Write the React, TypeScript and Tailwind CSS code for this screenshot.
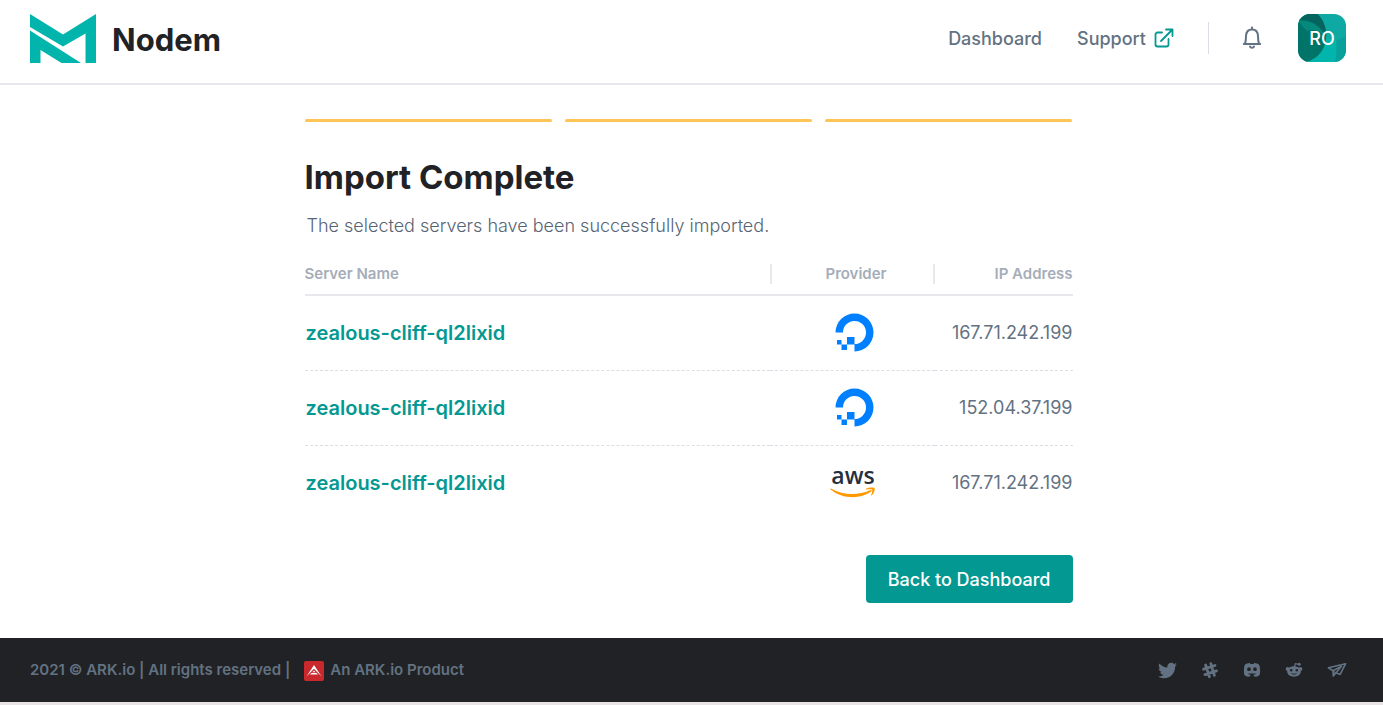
import { FaTwitter } from "react-icons/fa";

type Provider = "digitalocean" | "aws";

const servers: { name: string; provider: Provider; ip: string }[] = [
  { name: "zealous-cliff-ql2lixid", provider: "digitalocean", ip: "167.71.242.199" },
  { name: "zealous-cliff-ql2lixid", provider: "digitalocean", ip: "152.04.37.199" },
  { name: "zealous-cliff-ql2lixid", provider: "aws", ip: "167.71.242.199" },
];

function NodemMark() {
  return (
    <svg viewBox="0 0 66 49" className="h-[49px] w-[66px] fill-[#02b5ac]" aria-hidden="true">
      <path d="M0 0 L33 20.5 L66 0 V49 H55.5 V19.5 L33 32.5 L0 13 Z" />
      <path d="M0 16.5 L51 49 H31.5 L10.5 36 V49 H0 Z" />
    </svg>
  );
}

function ExternalIcon() {
  return (
    <svg
      viewBox="0 0 20 20"
      className="size-5 fill-none stroke-[#039891] stroke-[1.8]"
      strokeLinecap="round"
      strokeLinejoin="round"
      aria-hidden="true"
    >
      <path d="M8 4.5 H3.5 A2 2 0 0 0 1.5 6.5 V16.5 A2 2 0 0 0 3.5 18.5 H12.500 A2 2 0 0 0 14.500 16.5 V11" />
      <path d="M7 13 L18 2 M12 1.5 H18.5 V8" />
    </svg>
  );
}

function BellIcon() {
  return (
    <svg
      viewBox="0 0 20 24"
      className="h-6 w-5 fill-none stroke-[#637282] stroke-2"
      strokeLinecap="round"
      strokeLinejoin="round"
      aria-hidden="true"
    >
      <path d="M10 1.500 V3 M1.800 18 H18.200 M3 17.500 C4 15.500 3.800 13 4 10 C4.200 6 6.500 3.500 10 3.500 S15.800 6 16 10 C16.200 13 16 15.500 17 17.500" />
      <path d="M8 20.500 C8.500 22.300 11.500 22.300 12 20.500" />
    </svg>
  );
}

function AvatarArt() {
  return (
    <svg viewBox="0 0 48 48" className="col-start-1 row-start-1 size-12" aria-hidden="true">
      <rect width="48" height="48" fill="#0ea9a2" />
      <path d="M0 0 H20 C29 10 31 26 25 35 C21 42 15 46 9 48 H0 Z" fill="#007468" />
      <path d="M2 6 C13 5 23 12 28 22 C28 12 25 5 19 0 H7 Z" fill="#05655e" />
      <path d="M1 7 C14 5 24 14 28 24 C21 15 15 15 9 17 C6 14 3 11 1 7 Z" fill="#05897d" />
      <path d="M28 22 C32 27 36 27 39 26 C38 34 39 41 37 48 H9 C21 44 28 36 28 22 Z" fill="#02b5ac" />
      <path d="M38 26 C42 26 45 24 48 21 V48 H37 C39 40 39 33 38 26 Z" fill="#08a09a" />
    </svg>
  );
}

function DigitalOceanLogo() {
  return (
    <svg viewBox="0 0 39 39" className="size-[39px] fill-[#0080ff]" role="img" aria-label="DigitalOcean">
      <path d="M19.500 38.500 V31 A11.500 11.500 0 1 0 8 19.500 H0.500 A19 19 0 1 1 19.500 38.500 Z" />
      <path d="M12 24 H19.500 V31.500 H12 Z M6.500 31.500 H12 V37 H6.500 Z M2 27 H6.500 V31.500 H2 Z" />
    </svg>
  );
}

function AwsLogo() {
  return (
    <span className="flex flex-col items-center gap-0.5 pr-0.5 pb-0.5">
      <span className="font-['Open_Sans',sans-serif] text-[23px] leading-5 font-semibold text-[#252f3e]">aws</span>
      <svg viewBox="0 0 46 11" className="h-[11px] w-[46px] fill-[#ff9900]" aria-hidden="true">
        <path d="M0.800 1.500 C14 8.500 28 8.500 40 3.200 C41.500 2.600 42.300 3.800 41 4.800 C30 12.500 12 12 0.600 2.400 C0 1.800 0.200 1.200 0.800 1.500 Z" />
        <path d="M36 1.800 C38.500 0.200 43.500 0 44.500 1 C45.400 2.200 44 6.500 41.800 8.300 C41.300 8.700 40.900 8.500 41.100 8 C41.800 6.300 42.800 3.500 42.200 2.700 C41.600 2 38.300 2.300 36.500 2.500 C35.900 2.600 35.600 2.100 36 1.800 Z" />
      </svg>
    </span>
  );
}

function HashIcon() {
  return (
    <svg
      viewBox="0 0 18 18"
      className="size-[18px] fill-none stroke-[#637282] stroke-[2.8]"
      strokeLinecap="round"
      aria-hidden="true"
    >
      <path d="M4.600 4 L8.400 15.700 M9.800 2.700 L13.400 14.400 M2.600 8.200 L14 4.500 M3.900 13.600 L15.500 9.900" />
    </svg>
  );
}

function DiscordIcon() {
  return (
    <svg viewBox="0 0 18 18" className="size-[18px] fill-[#637282]" aria-hidden="true">
      <path
        fillRule="evenodd"
        d="M4.200 2.600 C5.300 2 6.300 1.900 7 2 L7.300 2.900 H10.700 L11 2 C11.700 1.900 12.700 2 13.800 2.600 C15.800 3 16.600 4.300 16.800 6 C17.200 8.500 17.200 11 16.900 13.200 C16.300 14.700 14.500 15.700 12.800 15.800 L10.700 15.300 V13.600 H12.500 V12.600 H5.500 V13.600 H7.300 V15.300 L5.200 15.800 C3.500 15.700 1.700 14.700 1.100 13.200 C0.800 11 0.800 8.500 1.200 6 C1.400 4.300 2.200 3 4.200 2.600 Z M6 6.300 A1.900 1.900 0 1 0 6 10.100 A1.900 1.900 0 1 0 6 6.300 Z M12 6.300 A1.900 1.900 0 1 0 12 10.100 A1.900 1.900 0 1 0 12 6.300 Z"
      />
    </svg>
  );
}

function RedditIcon() {
  return (
    <svg viewBox="0 0 18 18" className="size-[18px] fill-[#637282]" aria-hidden="true">
      <path d="M9.500 6 L10.300 2.700 L14 3.300" fill="none" stroke="#637282" strokeWidth="1.200" />
      <circle cx="14.200" cy="3.300" r="1.500" />
      <circle cx="2.600" cy="8" r="2" />
      <circle cx="15.400" cy="8" r="2" />
      <path
        fillRule="evenodd"
        d="M9 5.300 C13 5.300 15.800 7.500 15.800 10.500 S13 15.700 9 15.700 S2.200 13.500 2.200 10.500 S5 5.300 9 5.300 Z M6.200 7.900 A1.300 1.300 0 1 0 6.200 10.500 A1.300 1.300 0 1 0 6.200 7.900 Z M11.800 7.900 A1.300 1.300 0 1 0 11.800 10.500 A1.300 1.300 0 1 0 11.800 7.900 Z M5.800 12 C7.500 14.300 10.500 14.300 12.200 12 C10 13 8 13 5.800 12 Z"
      />
    </svg>
  );
}

function PlaneIcon() {
  return (
    <svg
      viewBox="0 0 20 18"
      className="h-[18px] w-5 fill-none stroke-[#637282] stroke-[1.6]"
      strokeLinejoin="round"
      strokeLinecap="round"
      aria-hidden="true"
    >
      <path d="M18.600 2.700 L1.400 6.800 L6 9.700 L6.300 15 L9 11.800 L13.200 13.400 Z" />
      <path d="M6 9.700 L14.500 5.300 L9 11.800 M7 10.500 L6.600 14" />
    </svg>
  );
}

function ArkMark() {
  return (
    <svg viewBox="0 0 20 20" className="size-5" aria-hidden="true">
      <rect width="20" height="20" rx="2" fill="#c9292c" />
      <path d="M10 4 L17.500 15.500 L10 7.800 L2.500 15.500 Z" fill="#fff" />
      <path d="M10 9.500 L11.600 11.200 H8.400 Z M7.500 12 H12.500 L14 13.500 H6 Z" fill="#fff" />
    </svg>
  );
}

export default function App() {
  return (
    <div className="min-h-screen bg-white font-['Inter',sans-serif] text-[#637282]">
      <header className="flex h-[85px] items-center justify-between border-b-2 border-[#e6e8ec] pr-[37px] pb-[7px] pl-[30px]">
        <a href="#" className="flex items-center gap-4">
          <NodemMark />
          <span className="pt-1 text-[31px] leading-10 font-bold text-[#212225]">Nodem</span>
        </a>
        <nav className="flex items-center text-[18px] font-medium">
          <a href="#">Dashboard</a>
          <a href="#" className="ml-[35px] flex items-center gap-2">
            Support
            <ExternalIcon />
          </a>
          <span className="ml-[34px] h-8 w-px bg-[#dbdee5]" />
          <button type="button" aria-label="Notifications" className="ml-[33px]">
            <BellIcon />
          </button>
          <button type="button" className="ml-9 grid size-12 place-items-center overflow-hidden rounded-xl">
            <AvatarArt />
            <span className="z-10 col-start-1 row-start-1 text-white">RO</span>
          </button>
        </nav>
      </header>

      <main className="mx-auto w-full max-w-[774px] pt-[34px] pr-[6px] pb-[35px]">
        <div className="grid grid-cols-3 gap-[13px]">
          <div className="h-[3px] rounded-full bg-[#ffc657]" />
          <div className="h-[3px] rounded-full bg-[#ffc657]" />
          <div className="h-[3px] rounded-full bg-[#ffc657]" />
        </div>
        <h1 className="mt-[35px] text-[33px] leading-10 font-bold text-[#212225]">Import Complete</h1>
        <p className="mt-[17px] pl-[2px] text-[18px] leading-6 font-light text-[#566474]">
          The selected servers have been successfully imported.
        </p>

        <table className="mt-[15px] w-full table-fixed border-collapse">
          <thead>
            <tr className="h-[42px] border-b-2 border-[#e6e8ec] text-[15px] leading-5 text-[#a5adb9]">
              <th className="p-0 text-left font-semibold">Server Name</th>
              <th className="w-[165px] p-0 font-semibold">
                <span className="block border-x-2 border-[#e6e8ec] pl-2">Provider</span>
              </th>
              <th className="w-[138px] p-0 text-right font-semibold">IP Address</th>
            </tr>
          </thead>
          <tbody>
            {servers.map((server, i) => (
              <tr key={i} className="h-[75px] border-b border-dashed border-[#dbdee5] last:border-0">
                <td className="p-0 pl-px text-[20px] font-semibold">
                  <a href="#" className="text-[#039891]">
                    {server.name}
                  </a>
                </td>
                <td className="p-0">
                  <div className="flex justify-center pl-1">
                    {server.provider === "aws" ? <AwsLogo /> : <DigitalOceanLogo />}
                  </div>
                </td>
                <td className="p-0 text-right text-[18px]">{server.ip}</td>
              </tr>
            ))}
          </tbody>
        </table>

        <div className="mt-[35px] flex justify-end">
          <button type="button" className="h-12 rounded bg-[#039891] px-[22px] text-[18px] font-medium text-white">
            Back to Dashboard
          </button>
        </div>
      </main>

      <footer className="flex h-[67px] items-center justify-between border-b-3 border-[#e8e4e6] bg-[#212225] pr-9 pl-[30px] text-[15px] font-semibold">
        <div className="flex items-center gap-[14px] pt-px">
          <span>2021 © ARK.io | All rights reserved |</span>
          <a href="#" className="flex items-center gap-[6px]">
            <ArkMark />
            An ARK.io Product
          </a>
        </div>
        <div className="flex items-center gap-6 text-[19px]">
          <a href="#" aria-label="Twitter"><FaTwitter /></a>
          <a href="#" aria-label="Slack"><HashIcon /></a>
          <a href="#" aria-label="Discord"><DiscordIcon /></a>
          <a href="#" aria-label="Reddit"><RedditIcon /></a>
          <a href="#" aria-label="Telegram"><PlaneIcon /></a>
        </div>
      </footer>
    </div>
  );
}
